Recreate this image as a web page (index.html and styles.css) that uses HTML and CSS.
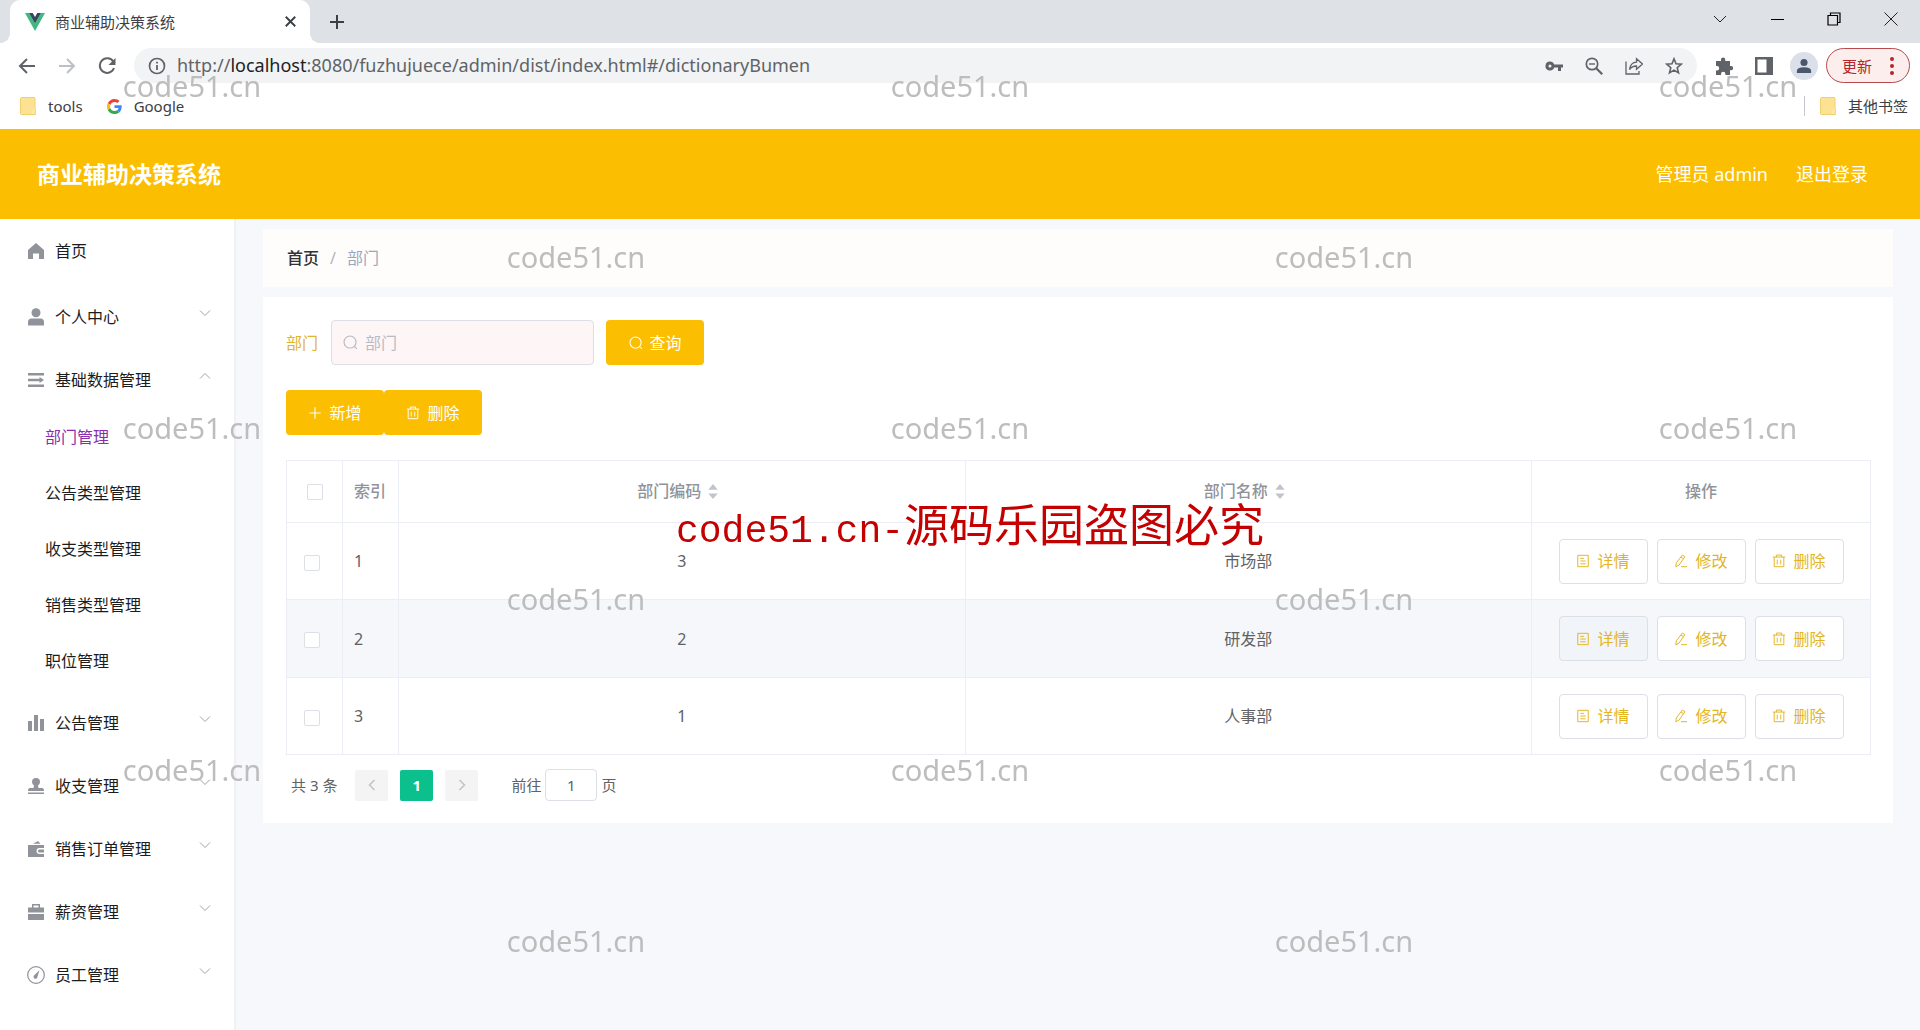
FILE: index.html
```html
<!DOCTYPE html>
<html lang="zh-CN">
<head>
<meta charset="utf-8">
<title>商业辅助决策系统</title>
<link rel="stylesheet" href="styles.css">
</head>
<body>
<svg class="sprite" aria-hidden="true">
  <symbol id="i-down" viewBox="0 0 12 12"><path d="M1 3.500l5 5 5-5" fill="none" stroke="currentColor"/></symbol>
  <symbol id="i-up" viewBox="0 0 12 12"><path d="M1 8.500l5-5 5 5" fill="none" stroke="currentColor"/></symbol>
  <symbol id="i-search" viewBox="0 0 16 16"><g fill="none" stroke="currentColor" stroke-width="1.200"><circle cx="7.500" cy="7.500" r="6.400"/><path d="M12 12l2.800 2.800"/></g></symbol>
  <symbol id="i-plus" viewBox="0 0 16 16"><path d="M8 1.500v13M1.500 8h13" fill="none" stroke="currentColor" stroke-width="1.300"/></symbol>
  <symbol id="i-trash" viewBox="0 0 16 16"><path d="M1 3.500h14M5 3.500V1.200h6v2.300M2.500 3.500v11h11v-11M6 6.500v5.500M10 6.500v5.500" fill="none" stroke="currentColor" stroke-width="1.100"/></symbol>
  <symbol id="i-doc" viewBox="0 0 16 16"><path d="M2 1.500h12v13H2zM5 5h4M5 8h6M5 11.200h6" fill="none" stroke="currentColor" stroke-width="1.100"/></symbol>
  <symbol id="i-edit" viewBox="0 0 16 16"><path d="M9.500 1.200l3 1.800-6.800 9.800L2 14.500l.7-4.500zM8 3.500l3 1.900M8 14.500h7" fill="none" stroke="currentColor" stroke-width="1.100" stroke-linejoin="round"/></symbol>
  <symbol id="i-folder" viewBox="0 0 16 18"><path d="M1.500.5H14q1 0 1 1V12q1 .4 1 2v2.500q0 1-1 1H1.500q-1 0-1-1v-15q0-1 1-1z" fill="#fce292" stroke="#efd06e"/><path d="M13 17v-3.500l2-1.500" fill="none" stroke="#fff2c4"/></symbol>
</svg>

<div class="browser">
  <div class="tabs">
    <div class="tab">
      <svg class="vue" viewBox="0 0 20 18"><path d="M0 0h4l6 10.500L16 0h4L10 18z" fill="#41b883"/><path d="M4 0h3.700L10 4l2.300-4H16l-6 10.500z" fill="#35495e"/></svg>
      <span class="tab-title">商业辅助决策系统</span>
      <button class="tab-close" aria-label="关闭标签页"><svg viewBox="0 0 10 10"><path d="M.7.7l8.600 8.600M9.300.7L.7 9.300" stroke="#3c4043" stroke-width="1.700"/></svg></button>
    </div>
    <button class="tab-new" aria-label="新标签页"><svg viewBox="0 0 16 16"><path d="M8 1v14M1 8h14" stroke="#3c4043" stroke-width="2"/></svg></button>
    <div class="window">
      <button aria-label="搜索标签页"><svg viewBox="0 0 14 14"><path d="M1 4l6 6 6-6" fill="none" stroke="#222"/></svg></button>
      <button aria-label="最小化"><svg viewBox="0 0 14 14"><path d="M1 7.500h13" stroke="#000"/></svg></button>
      <button aria-label="还原"><svg viewBox="0 0 14 14"><path d="M1 3.500h9.500V13H1zM3.500 3.500V1H13v9.500h-2.500" fill="none" stroke="#000" stroke-width="1.200"/></svg></button>
      <button aria-label="关闭"><svg viewBox="0 0 14 14"><path d="M.5.5l13 13M13.500.5l-13 13" stroke="#222"/></svg></button>
    </div>
  </div>
  <div class="toolbar">
    <button class="tool" aria-label="后退"><svg viewBox="0 0 18 18"><path d="M17 9H2M9 2L2 9l7 7" fill="none" stroke="#5f6368" stroke-width="2"/></svg></button>
    <button class="tool" aria-label="前进"><svg viewBox="0 0 18 18"><path d="M1 9h15M9 2l7 7-7 7" fill="none" stroke="#bdc1c6" stroke-width="2"/></svg></button>
    <button class="tool" aria-label="刷新"><svg viewBox="0 0 18 18"><path d="M15.500 5A7.300 7.300 0 1 0 16 11" fill="none" stroke="#5f6368" stroke-width="2"/><path d="M17.500 1v7h-7z" fill="#5f6368"/></svg></button>
    <div class="omnibox">
      <svg class="info" viewBox="0 0 18 18"><circle cx="9" cy="9" r="7.500" fill="none" stroke="#5f6368" stroke-width="1.700"/><path d="M9 8v5M9 4.800v1.800" stroke="#5f6368" stroke-width="1.800"/></svg>
      <div class="url" role="textbox" aria-label="地址" contenteditable="true" spellcheck="false">http://<span class="host">localhost</span>:8080/fuzhujuece/admin/dist/index.html#/dictionaryBumen</div>
      <button class="tool" aria-label="密码"><svg viewBox="0 0 18 18"><path d="M5 4.500a4.500 4.500 0 1 0 4.200 6H13V14h3v-3.500h2v-3H9.200A4.500 4.500 0 0 0 5 4.500zm0 3a1.500 1.500 0 1 1 0 3 1.500 1.500 0 0 1 0-3z" fill="#5f6368"/></svg></button>
      <button class="tool" aria-label="缩放"><svg viewBox="0 0 18 18"><g fill="none" stroke="#5f6368"><circle cx="7" cy="7" r="5.700" stroke-width="1.700"/><path d="M4 7h6" stroke-width="1.400"/><path d="M11.200 11.200l6 6" stroke-width="2.200"/></g></svg></button>
      <button class="tool" aria-label="分享"><svg viewBox="0 0 18 18"><path d="M1 4.500V17h13v-3M4.500 12.500q1-7 7-7.300V1.700l6 5.300-6 5.300V9Q7 9 4.500 12.500z" fill="none" stroke="#5f6368" stroke-width="1.300"/></svg></button>
      <button class="tool" aria-label="收藏"><svg viewBox="0 0 18 18"><path d="M9 1.800l2 5 5.300.4-4.100 3.500 1.300 5.200L9 13.100l-4.500 2.800 1.300-5.200-4.100-3.500L7 6.800z" fill="none" stroke="#5f6368" stroke-width="1.600"/></svg></button>
    </div>
    <button class="tool" aria-label="扩展程序"><svg viewBox="0 0 18 18"><path d="M1 4h5V2.500a2 2 0 0 1 4.200 0V4H15v5h1a2.100 2.100 0 0 1 0 4.200h-1V18h-4.600v-1a2.200 2.200 0 0 0-4.400 0v1H1v-4.600h1a2.200 2.200 0 0 0 0-4.400H1z" fill="#5f6368"/></svg></button>
    <button class="tool" aria-label="侧边栏"><svg viewBox="0 0 18 18"><path d="M0 0h18v18H0zM2.500 2.500v13h9v-13z" fill="#5f6368" fill-rule="evenodd"/></svg></button>
    <button class="tool" aria-label="个人资料"><span class="avatar"><svg viewBox="0 0 18 18"><circle cx="9" cy="5" r="4" fill="#4a566c"/><path d="M1 17v-2.500q0-4 8-4t8 4V17z" fill="#4a566c"/></svg></span></button>
    <button class="update"><span>更新</span><svg viewBox="0 0 4 18"><g fill="#b3262c"><circle cx="2" cy="2" r="2"/><circle cx="2" cy="9" r="2"/><circle cx="2" cy="16" r="2"/></g></svg></button>
  </div>
  <div class="bookmarks">
    <a href="#"><svg class="folder"><use href="#i-folder"/></svg>tools</a>
    <a href="#"><svg class="google" viewBox="0 0 48 48"><path fill="#ea4335" d="M24 9.500c3.500 0 6.700 1.200 9.200 3.600l6.900-6.900C35.900 2.400 30.500 0 24 0 14.600 0 6.500 5.400 2.600 13.200l8 6.200C12.400 13.700 17.700 9.500 24 9.500z"/><path fill="#4285f4" d="M47 24.600c0-1.600-.2-3.100-.4-4.600H24v9h12.900c-.6 3-2.200 5.500-4.700 7.200l7.700 6C44.400 38 47 31.800 47 24.600z"/><path fill="#fbbc05" d="M10.500 28.600a14.500 14.500 0 0 1 0-9.200l-8-6.200a24 24 0 0 0 0 21.600z"/><path fill="#34a853" d="M24 48c6.500 0 11.900-2.100 15.900-5.800l-7.700-6c-2.200 1.500-4.900 2.300-8.200 2.300-6.300 0-11.600-4.200-13.500-9.900l-8 6.200C6.500 42.600 14.600 48 24 48z"/></svg>Google</a>
    <a class="other" href="#"><svg class="folder"><use href="#i-folder"/></svg>其他书签</a>
  </div>
</div>

<header class="header">
  <h1>商业辅助决策系统</h1>
  <span>管理员 admin</span>
  <a href="#">退出登录</a>
</header>

<div class="layout">
  <nav class="sidebar">
    <a class="item home" href="#"><svg class="ic" viewBox="0 0 18 18"><path d="M9 1L1 8v9h5v-5.500h6V17h5V8z"/></svg>首页</a>
    <a class="item" href="#"><svg class="ic" viewBox="0 0 18 18"><circle cx="9" cy="4.800" r="4.500"/><path d="M1 17.500V14q0-3.500 3.500-3.500h9Q17 10.500 17 14v3.500z"/></svg>个人中心<svg class="arrow"><use href="#i-down"/></svg></a>
    <a class="item" href="#"><svg class="ic" viewBox="0 0 18 18"><path d="M1 2h16v2.600H1zM1 7.700h12v2.600H1zM1 13.400h16V16H1zM12.500 6L17 9l-4.500 3z"/></svg>基础数据管理<svg class="arrow"><use href="#i-up"/></svg></a>
    <a class="sub active" href="#">部门管理</a>
    <a class="sub" href="#">公告类型管理</a>
    <a class="sub" href="#">收支类型管理</a>
    <a class="sub" href="#">销售类型管理</a>
    <a class="sub" href="#">职位管理</a>
    <a class="item" href="#"><svg class="ic" viewBox="0 0 18 18"><path d="M1 7h4v10H1zM7 1h4v16H7zM13 5h4v12h-4z"/></svg>公告管理<svg class="arrow"><use href="#i-down"/></svg></a>
    <a class="item" href="#"><svg class="ic" viewBox="0 0 18 18"><path d="M9 1a4 4 0 0 1 4 4q0 2-2 3.500l.5 2.500H15q2 0 2 3H1q0-3 2-3h3.500L7 8.500Q5 7 5 5a4 4 0 0 1 4-4zM1 15.500h16V17H1z"/></svg>收支管理<svg class="arrow"><use href="#i-down"/></svg></a>
    <a class="item" href="#"><svg class="ic" viewBox="0 0 18 18"><path fill-rule="evenodd" d="M1 5h16v3h-4.500a3 3 0 0 0 0 6H17v3H1zM12.500 9.500H17v3h-4.500a1.500 1.500 0 0 1 0-3zM6 3.800L11 1l2.500 2.800z"/></svg>销售订单管理<svg class="arrow"><use href="#i-down"/></svg></a>
    <a class="item" href="#"><svg class="ic" viewBox="0 0 18 18"><path fill-rule="evenodd" d="M1 4.500h4V1h8v3.500h4v5H1zM6.500 2.500v2h5v-2zM1 11h16v6H1z"/></svg>薪资管理<svg class="arrow"><use href="#i-down"/></svg></a>
    <a class="item" href="#"><svg class="ic" viewBox="0 0 18 18"><circle cx="9" cy="9" r="8.300" fill="none" stroke="#909399" stroke-width="1.200"/><path d="M12.500 4l-2 6.500a2 2 0 1 1-3-1.500z"/></svg>员工管理<svg class="arrow"><use href="#i-down"/></svg></a>
  </nav>

  <main class="content">
    <div class="crumbs"><a href="#">首页</a><span class="slash">/</span><span>部门</span></div>
    <section class="card">
      <form class="search">
        <label for="dept">部门</label>
        <div class="field"><svg><use href="#i-search"/></svg><input id="dept" type="text" placeholder="部门"></div>
        <button class="primary" type="button"><svg><use href="#i-search"/></svg>查询</button>
      </form>
      <div class="actions">
        <button class="primary"><svg><use href="#i-plus"/></svg>新增</button>
        <button class="primary"><svg><use href="#i-trash"/></svg>删除</button>
      </div>
      <table>
        <colgroup><col class="c-narrow"><col class="c-narrow"><col><col><col class="c-ops"></colgroup>
        <thead>
          <tr>
            <th><input type="checkbox" aria-label="全选"></th>
            <th class="left">索引</th>
            <th>部门编码<svg class="sort" viewBox="0 0 10 16"><path d="M0 6l5-6 5 6zM0 10l5 6 5-6z"/></svg></th>
            <th>部门名称<svg class="sort" viewBox="0 0 10 16"><path d="M0 6l5-6 5 6zM0 10l5 6 5-6z"/></svg></th>
            <th>操作</th>
          </tr>
        </thead>
        <tbody>
          <tr>
            <td class="check"><input type="checkbox" aria-label="选择第 1 行"></td><td class="left">1</td><td>3</td><td>市场部</td>
            <td><div class="ops"><button class="detail"><svg><use href="#i-doc"/></svg>详情</button><button><svg><use href="#i-edit"/></svg>修改</button><button><svg><use href="#i-trash"/></svg>删除</button></div></td>
          </tr>
          <tr class="hover">
            <td class="check"><input type="checkbox" aria-label="选择第 2 行"></td><td class="left">2</td><td>2</td><td>研发部</td>
            <td><div class="ops"><button class="detail"><svg><use href="#i-doc"/></svg>详情</button><button><svg><use href="#i-edit"/></svg>修改</button><button><svg><use href="#i-trash"/></svg>删除</button></div></td>
          </tr>
          <tr>
            <td class="check"><input type="checkbox" aria-label="选择第 3 行"></td><td class="left">3</td><td>1</td><td>人事部</td>
            <td><div class="ops"><button class="detail"><svg><use href="#i-doc"/></svg>详情</button><button><svg><use href="#i-edit"/></svg>修改</button><button><svg><use href="#i-trash"/></svg>删除</button></div></td>
          </tr>
        </tbody>
      </table>
      <div class="pager">
        <span>共 3 条</span>
        <div class="pages">
          <button disabled aria-label="上一页"><svg viewBox="0 0 12 12"><path d="M8.500 1l-5 5 5 5" fill="none" stroke="#c0c4cc" stroke-width="1.600"/></svg></button>
          <button class="current">1</button>
          <button disabled aria-label="下一页"><svg viewBox="0 0 12 12"><path d="M3.500 1l5 5-5 5" fill="none" stroke="#c0c4cc" stroke-width="1.600"/></svg></button>
        </div>
        <label class="jump">前往<input type="text" value="1">页</label>
      </div>
    </section>
  </main>
</div>

<div class="watermarks" aria-hidden="true">
  <span class="a">code51.cn</span><span class="c">code51.cn</span><span class="e">code51.cn</span>
  <span class="b">code51.cn</span><span class="d">code51.cn</span>
  <span class="a">code51.cn</span><span class="c">code51.cn</span><span class="e">code51.cn</span>
  <span class="b">code51.cn</span><span class="d">code51.cn</span>
  <span class="a">code51.cn</span><span class="c">code51.cn</span><span class="e">code51.cn</span>
  <span class="b">code51.cn</span><span class="d">code51.cn</span>
</div>
<div class="notice" aria-hidden="true"><span class="latin">code51.cn-</span>源码乐园盗图必究</div>
</body>
</html>
```
FILE: styles.css
```css
* { box-sizing: border-box; }
body {
  margin: 0;
  min-height: 100vh;
  display: flex;
  flex-direction: column;
  background: #f6f8fb;
  color: #606266;
  font: 16px/24px "Noto Sans", "Noto Sans CJK SC", sans-serif;
}
a { color: inherit; text-decoration: none; }
button, input { font: inherit; color: inherit; }
button { border: 0; padding: 0; background: none; display: flex; align-items: center; justify-content: center; }
svg { flex: none; }
.sprite { position: absolute; width: 0; height: 0; }

/* browser frame */
.browser { background: #fff; }
.tabs { display: flex; align-items: center; height: 43px; background: #dee1e6; padding-left: 10px; }
.tab {
  position: relative;
  align-self: stretch;
  width: 300px;
  display: flex;
  align-items: center;
  padding: 0 14px 0 15px;
  background: #fff;
  border-radius: 10px 10px 0 0;
}
.tab::before, .tab::after { content: ""; position: absolute; bottom: 0; width: 10px; height: 10px; }
.tab::before { left: -10px; background: radial-gradient(circle at 0 0, #dee1e6 10px, #fff 10px); }
.tab::after { right: -10px; background: radial-gradient(circle at 100% 0, #dee1e6 10px, #fff 10px); }
.vue { width: 20px; height: 18px; }
.tab-title { flex: 1; margin-left: 10px; font-size: 15px; color: #3c4043; }
.tab-close svg { width: 11px; height: 11px; }
.tab-new { margin-left: 19px; }
.tab-new svg { width: 16px; height: 16px; }
.window { display: flex; margin-left: auto; align-self: stretch; padding: 0 1px 6px 0; }
.window button { width: 57px; }
.window svg { width: 14px; height: 14px; }
.toolbar { display: flex; align-items: center; padding: 5px 10px 2px 7px; }
.tool { width: 40px; height: 35px; }
.tool svg { width: 18px; height: 18px; }
.omnibox {
  flex: 1;
  display: flex;
  align-items: center;
  height: 35px;
  margin: 0 7px;
  padding: 0 3px 0 14px;
  border-radius: 18px;
  background: #f1f3f4;
}
.info { width: 18px; height: 18px; }
.url { flex: 1; margin-left: 11px; padding-bottom: 2px; font-size: 18px; color: #5f6368; white-space: nowrap; }
.host { color: #202124; }
.avatar { display: flex; align-items: center; justify-content: center; width: 28px; height: 28px; border-radius: 50%; background: #dadfea; }
.tool .avatar svg { width: 16px; height: 16px; }
.update {
  width: 84px;
  height: 35px;
  margin-left: 2px;
  gap: 18px;
  border: 1px solid #b8494d;
  border-radius: 18px;
  background: #fbeeec;
  color: #b3262c;
  font-size: 15px;
}
.update svg { width: 4px; height: 18px; }
.bookmarks { display: flex; gap: 24px; height: 44px; padding: 0 12px 2px 20px; color: #3c4043; font-size: 15px; }
.bookmarks a { display: flex; align-items: center; gap: 12px; }
.folder { width: 16px; height: 18px; }
.google { width: 15px; height: 15px; }
.bookmarks .other { margin-left: auto; position: relative; }
.other::before { content: ""; position: absolute; left: -16px; top: 11px; width: 1px; height: 20px; background: #c6c9cd; }

/* application header */
.header { display: flex; align-items: center; height: 90px; padding: 0 52px 0 37px; background: #fcbe00; color: #fff; font-size: 18px; }
.header h1 { flex: 1; margin: 0; font-size: 23px; line-height: 32px; }
.header a { margin-left: 28px; }

.layout { flex: 1; display: grid; grid-template-columns: 236px 1fr; }

/* sidebar */
.sidebar { background: #fff; border-right: 2px solid #f0f1f4; color: #1c1c1c; }
.item { display: flex; align-items: center; height: 63px; padding: 0 23px 0 27px; }
.item.home { height: 66px; padding-bottom: 2px; }
.ic { width: 18px; height: 18px; margin-right: 10px; fill: #909399; }
.arrow { width: 12px; height: 12px; margin: 0 0 8px auto; color: #a0a3a9; }
.sub { display: flex; align-items: center; height: 56px; padding: 0 0 4px 45px; }
.sub.active { color: #8a2cab; }

/* content */
.content { padding: 10px 27px 10px; }
.crumbs { display: flex; align-items: center; gap: 11px; height: 58px; padding: 0 24px; background: #fffdfc; color: #97a8be; }
.crumbs a { color: #303133; font-weight: 500; }
.slash { color: #b0b4bd; }
.card { margin-top: 10px; padding: 23px 22px 22px 23px; background: #fff; }
.search { display: flex; align-items: center; }
.search label { color: #e0b42c; }
.field { display: flex; align-items: center; gap: 7px; width: 263px; height: 45px; margin: 0 12px 0 13px; padding: 0 11px; border: 1px solid #dcdfe6; border-radius: 4px; background: #fef5f6; color: #b8bbc3; }
.field svg { width: 15px; height: 15px; }
.field input { width: 100%; min-width: 0; border: 0; padding: 0; background: none; outline: 0; }
.field input::placeholder { color: #b8bbc3; }
.primary { width: 98px; height: 45px; gap: 7px; border-radius: 4px; background: #fcbe00; color: #fff; }
.primary svg { width: 14px; height: 14px; }
.actions { display: flex; margin: 25px 0; }

table { width: 100%; table-layout: fixed; border-collapse: separate; border-spacing: 0; border: solid #ebeef5; border-width: 1px 1px 0 1px; }
.c-narrow { width: 56px; }
.c-ops { width: 338px; }
th, td { padding: 0; border: solid #ebeef5; border-width: 0 1px 1px 0; text-align: center; vertical-align: middle; }
th:last-child, td:last-child { border-right: 0; }
th { height: 62px; padding-bottom: 2px; color: #909399; font-weight: 500; }
td { height: 77px; }
.left { padding-left: 11px; text-align: left; }
.check { padding-left: 17px; text-align: left; }
.hover td { height: 78px; background: #f5f7fa; }
.sort { width: 10px; height: 15px; margin: 0 8px 0 7px; vertical-align: -2px; fill: #c0c4cc; }
input[type="checkbox"] { appearance: none; display: inline-block; width: 16px; height: 16px; margin: 0; border: 1px solid #dcdfe6; border-radius: 2px; background: #fff; vertical-align: middle; }
.ops { display: flex; justify-content: center; gap: 9px; }
.ops button { width: 89px; height: 45px; gap: 7px; border: 1px solid #dcdfe6; border-radius: 4px; background: #fff; color: #e3b51f; }
.ops svg { width: 14px; height: 14px; }
.hover .detail { background: #f1f4f8; }

.pager { display: flex; align-items: center; margin-top: 14px; padding-left: 5px; font-size: 15px; }
.pages { display: flex; gap: 12px; margin: 0 33px 0 18px; }
.pages button { width: 33px; height: 31px; border-radius: 2px; background: #f4f4f5; }
.pages svg { width: 12px; height: 12px; }
.pages .current { background: #0bc08c; color: #fff; font-weight: 700; }
.jump { display: flex; align-items: center; gap: 4px; }
.jump input { width: 52px; height: 32px; padding: 0; border: 1px solid #dcdfe6; border-radius: 4px; background: #fff; text-align: center; }

/* overlays */
.watermarks { position: fixed; inset: 0 0 4px; display: grid; grid-template: repeat(6, 1fr) / repeat(5, 1fr); place-items: center; pointer-events: none; color: #bdbdbd; font-size: 29px; line-height: 36px; }
.a { grid-column: 1; }
.b { grid-column: 2; }
.c { grid-column: 3; }
.d { grid-column: 4; }
.e { grid-column: 5; }
.notice { position: absolute; left: 0; right: 0; top: 492px; padding-left: 20px; display: flex; justify-content: center; align-items: baseline; pointer-events: none; color: #c40000; font-size: 45px; line-height: 66px; }
.latin { font: 38px/50px "Liberation Mono", monospace; }
```
